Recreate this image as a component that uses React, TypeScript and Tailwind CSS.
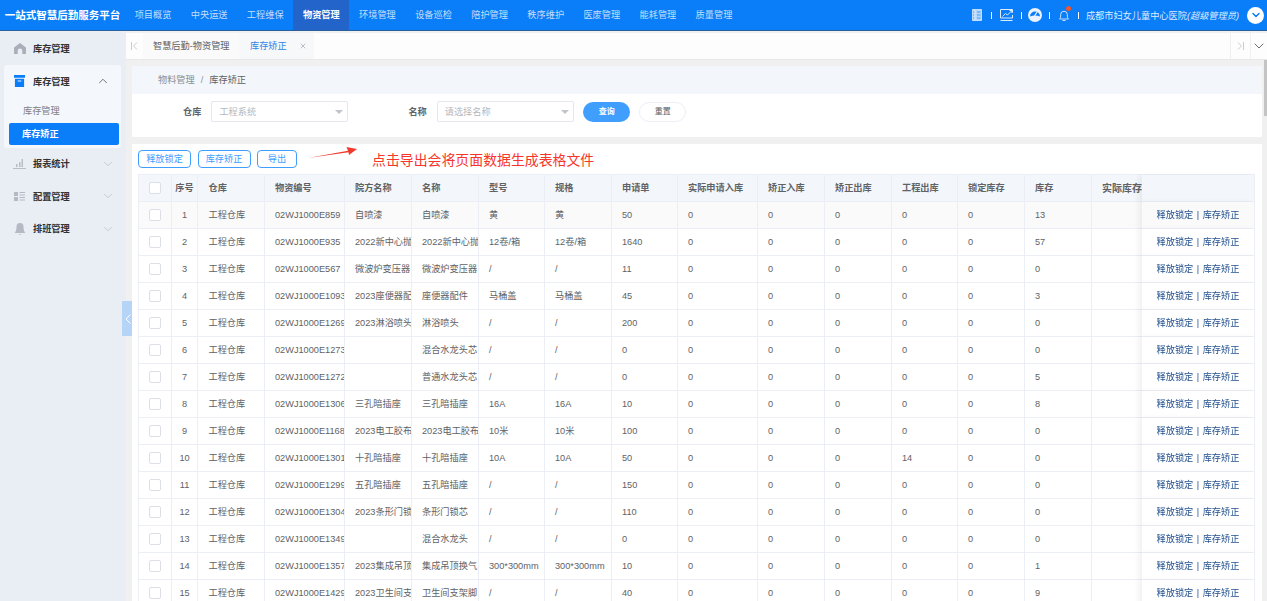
import React from 'react';
import { ChevronDown, ChevronUp, X } from 'lucide-react';

const navItems = ['项目概览', '中央运送', '工程维保', '物资管理', '环境管理', '设备巡检', '陪护管理', '秩序维护', '医废管理', '能耗管理', '质量管理'];

type Row = { n: number; code: string; yf: string; name: string; xh: string; gg: string; sq: string; gc: string; kc: string };

const rows: Row[] = [
  { n: 1, code: '02WJ1000E859', yf: '自喷漆', name: '自喷漆', xh: '黄', gg: '黄', sq: '50', gc: '0', kc: '13' },
  { n: 2, code: '02WJ1000E935', yf: '2022新中心抛', name: '2022新中心抛', xh: '12卷/箱', gg: '12卷/箱', sq: '1640', gc: '0', kc: '57' },
  { n: 3, code: '02WJ1000E567', yf: '微波炉变压器', name: '微波炉变压器', xh: '/', gg: '/', sq: '11', gc: '0', kc: '0' },
  { n: 4, code: '02WJ1000E1093', yf: '2023座便器配', name: '座便器配件', xh: '马桶盖', gg: '马桶盖', sq: '45', gc: '0', kc: '3' },
  { n: 5, code: '02WJ1000E1269', yf: '2023淋浴喷头', name: '淋浴喷头', xh: '/', gg: '/', sq: '200', gc: '0', kc: '0' },
  { n: 6, code: '02WJ1000E1273', yf: '', name: '混合水龙头芯', xh: '/', gg: '/', sq: '0', gc: '0', kc: '0' },
  { n: 7, code: '02WJ1000E1272', yf: '', name: '普通水龙头芯', xh: '/', gg: '/', sq: '0', gc: '0', kc: '5' },
  { n: 8, code: '02WJ1000E1306', yf: '三孔暗插座', name: '三孔暗插座', xh: '16A', gg: '16A', sq: '10', gc: '0', kc: '8' },
  { n: 9, code: '02WJ1000E1168', yf: '2023电工胶布', name: '2023电工胶布', xh: '10米', gg: '10米', sq: '100', gc: '0', kc: '0' },
  { n: 10, code: '02WJ1000E1301', yf: '十孔暗插座', name: '十孔暗插座', xh: '10A', gg: '10A', sq: '50', gc: '14', kc: '0' },
  { n: 11, code: '02WJ1000E1299', yf: '五孔暗插座', name: '五孔暗插座', xh: '/', gg: '/', sq: '150', gc: '0', kc: '0' },
  { n: 12, code: '02WJ1000E1304', yf: '2023条形门锁', name: '条形门锁芯', xh: '/', gg: '/', sq: '110', gc: '0', kc: '0' },
  { n: 13, code: '02WJ1000E1349', yf: '', name: '混合水龙头', xh: '/', gg: '/', sq: '0', gc: '0', kc: '0' },
  { n: 14, code: '02WJ1000E1357', yf: '2023集成吊顶', name: '集成吊顶换气', xh: '300*300mm', gg: '300*300mm', sq: '10', gc: '0', kc: '1' },
  { n: 15, code: '02WJ1000E1429', yf: '2023卫生间支', name: '卫生间支架脚', xh: '/', gg: '/', sq: '40', gc: '0', kc: '9' },
];

const heads = ['院方名称', '名称', '型号', '规格', '申请单', '实际申请入库', '矫正入库', '矫正出库', '工程出库', '锁定库存', '库存'];
const colWidths = ['w-[33px]', 'w-[26px]', 'w-[66.5px]', 'w-[80px]', 'w-[67px]', 'w-[67px]', 'w-[66px]', 'w-[67px]', 'w-[66px]', 'w-[80px]', 'w-[67px]', 'w-[67px]', 'w-[66px]', 'w-[67px]', 'w-[67px]', 'w-[67px]', 'w-[113px]'];

const cell = 'h-[27px] border-r border-b border-[#ebeef5] whitespace-nowrap overflow-hidden';
const th = `${cell} pt-[2px] px-[10.5px] text-left font-bold text-[#606266]`;
const td = `${cell} pt-[2px] px-[10.5px] text-left font-normal text-[#606266]`;
const thMid = `${cell} pt-[2px] px-0 text-center font-bold text-[#606266]`;
const tdMid = `${cell} pt-[2px] px-0 text-center text-[#606266]`;
const checkCell = `${cell} p-0`;
const fixedShadow = 'sticky right-0 shadow-[-4px_0_5px_rgba(0,0,0,0.05)]';
const outlineBtn = 'h-[18px] pt-[2px] border border-[#409eff] rounded-[4px] text-[#409eff] bg-white';

function Checkbox() {
  return <span className="block w-3 h-3 mx-auto bg-white border border-[#dcdfe6] rounded-[2px]" />;
}

function Select({ value }: { value: string }) {
  return (
    <div className="w-[137px] h-[21px] flex items-center justify-between pl-[7px] pr-[4px] bg-white border border-[#e4e7ed] rounded-[2px] text-[#b4b8c0]">
      <span className="pt-[2px]">{value}</span>
      <span className="w-0 h-0 border-x-[4px] border-x-transparent border-t-[4px] border-t-[#c0c4cc]" />
    </div>
  );
}

function SideItem({ label, icon, open }: { label: string; icon: React.ReactNode; open?: boolean }) {
  return (
    <div className="h-[32.5px] flex items-center pl-[13px] pr-[11px]">
      <span className="w-[13px] h-[13px] flex items-center justify-center">{icon}</span>
      <span className="ml-[7px] pt-[2px] font-bold text-[#303133]">{label}</span>
      {open === undefined ? null : open ? (
        <ChevronUp className="ml-auto w-[14px] h-[14px] text-[#606266]" strokeWidth={1.5} />
      ) : (
        <ChevronDown className="ml-auto w-[14px] h-[14px] text-[#c0c4cc]" strokeWidth={1.5} />
      )}
    </div>
  );
}

export default function App() {
  return (
    <div className="w-[1267px] h-[601px] overflow-hidden flex flex-col bg-[#f0f0f0] text-[9.2px] leading-none font-['Liberation_Sans','Noto_Sans_CJK_SC',sans-serif]">
      {/* top bar */}
      <header className="h-[31px] shrink-0 flex items-stretch bg-[#0a7df8] border-b border-[#2a5f9e] text-white">
        <div className="w-[125px] flex items-center justify-center text-[10.5px] font-bold">一站式智慧后勤服务平台</div>
        <nav className="flex">
          {navItems.map((item) => (
            <div
              key={item}
              className={item === '物资管理' ? 'w-[56.1px] pt-[2px] flex items-center justify-center font-bold bg-[#2264c9]' : 'w-[56.1px] pt-[2px] flex items-center justify-center text-[#c4defc]'}
            >
              {item}
            </div>
          ))}
        </nav>
        <div className="ml-auto flex items-center pr-[3px] text-[#dcecfe]">
          <svg viewBox="0 0 10 12" className="w-[10px] h-[12px]">
            <path d="M.5.5h9v11h-9z" fill="#b5d6fc" stroke="#dcecfe" strokeWidth=".8" />
            <path d="M3 0v12" stroke="#dcecfe" strokeWidth=".8" />
            <path d="M5 3h3.500M5 6h3.500M5 9h3.500M1 3h1M1 6h1M1 9h1" stroke="#3d95f9" strokeWidth=".9" />
          </svg>
          <span className="ml-[9.7px] mr-[7.3px] w-px h-[7px] bg-white" />
          <svg viewBox="0 0 13 12" className="w-[13px] h-[12px]" fill="none" stroke="currentColor" strokeWidth="1">
            <path d="M12.500 3.500V.5H.5v8.500h12V6M2.500 7.500l3-3 2 1.500L11.500 2M9.500 1.500h2.500V4M.5 11.500h12" />
          </svg>
          <span className="ml-[8px] mr-[6.3px] w-px h-[7px] bg-white" />
          <svg viewBox="0 0 14 14" className="w-[14px] h-[14px]">
            <circle cx="7" cy="7" r="7" fill="#eaf3fe" />
            <path d="M2 8.500a5 5 0 0 1 10 0c-3-1.500-7-1.500-10 0z" fill="#0a7df8" />
            <path d="M6.500 8l2.500-4" stroke="#eaf3fe" strokeWidth="1.200" />
          </svg>
          <span className="ml-[7px] mr-[9px] w-px h-[7px] bg-white" />
          <span className="relative">
            <svg viewBox="0 0 10 12" className="block w-[10px] h-[12px]" fill="none" stroke="currentColor" strokeWidth=".9">
              <path d="M.5 10c1-.8 1.200-2 1.200-4.500a3.300 3.300 0 0 1 6.600 0c0 2.500.2 3.700 1.200 4.500zM3.500 11.500h3" />
            </svg>
            <span className="absolute -top-[3px] -right-[2px] w-[5px] h-[5px] rounded-full bg-[#f2552c]" />
          </span>
          <span className="ml-[8.7px] mr-[7.3px] w-px h-[7px] bg-white" />
          <span className="pt-[3px]">
            成都市妇女儿童中心医院<i>(超级管理员)</i>
          </span>
          <span className="ml-[8px] w-[17px] h-[17px] rounded-full bg-white flex items-center justify-center">
            <ChevronDown className="w-[12px] h-[12px] text-[#0a7df8]" strokeWidth={3} />
          </span>
        </div>
      </header>

      <div className="flex-1 flex min-h-0">
        {/* sidebar */}
        <aside className="relative w-[126px] shrink-0 bg-[#e9edf4] pt-[1.5px]">
          <SideItem
            label="库存管理"
            icon={
              <svg viewBox="0 0 13 12" className="w-[12px] h-[11px]" fill="#a9aeb9">
                <path d="M6.500 0L0 5v7h4V8.500a2.500 2.500 0 0 1 5 0V12h4V5z" />
              </svg>
            }
          />
          <div className="ml-[4px] mr-[5px] bg-[#f4f8fc] rounded-[3px] pb-[3px]">
            <div className="-ml-[4px]">
              <SideItem
                label="库存管理"
                open
                icon={
                  <svg viewBox="0 0 12 13" className="w-[11px] h-[12px]" fill="#0a7df8">
                    <path d="M0 0h12v3H0zM1 4h10v9H1z" />
                    <path d="M4 6h4v1H4z" fill="#fff" />
                  </svg>
                }
              />
            </div>
            <div className="h-[21px] mt-[3px] pt-[2px] flex items-center pl-[19px] text-[#7d8088]">库存管理</div>
            <div className="h-[22px] mt-[1px] ml-[5px] mr-[2.5px] pl-[13px] pt-[2px] flex items-center font-bold text-white bg-[#0a7df8] rounded-[2px]">库存矫正</div>
          </div>
          <SideItem
            label="报表统计"
            open={false}
            icon={
              <svg viewBox="0 0 13 10" className="w-[13px] h-[10px]" fill="#b8bdc8">
                <path d="M0 9h13v1H0zM3 5h1.500v3H3zM6 3h1.500v5H6zM8.500 0H10v8H8.500z" />
              </svg>
            }
          />
          <SideItem
            label="配置管理"
            open={false}
            icon={
              <svg viewBox="0 0 11 9" className="w-[11px] h-[9px]" fill="#b4b9c4">
                <path d="M0 0h4v4H0zM0 5h4v4H0zM5.500 0H11v1H5.500zM5.500 2.500H11v1H5.500zM5.500 5H11v1H5.500zM5.500 7.500H11v1H5.500z" />
              </svg>
            }
          />
          <SideItem
            label="排班管理"
            open={false}
            icon={
              <svg viewBox="0 0 12 12" className="w-[12px] h-[12px]" fill="#b4b9c4">
                <path d="M6 0a3.500 3.500 0 0 0-3.500 3.500C2.500 7 2 8.500.5 10h11C10 8.500 9.500 7 9.500 3.500A3.500 3.500 0 0 0 6 0zM4.500 11h3L6 12z" />
              </svg>
            }
          />
          <button className="absolute left-[122px] top-[270px] w-[11px] h-[35px] flex items-center justify-center bg-[#b5d4f6] rounded-r-[2px]">
            <svg viewBox="0 0 6 10" className="w-[6px] h-[10px]" fill="none" stroke="#fff" strokeWidth="1">
              <path d="M5.500.5L1 5l4.500 4.500" />
            </svg>
          </button>
        </aside>

        <main className="relative flex-1 min-w-0 flex flex-col">
          {/* tabs */}
          <div className="h-[27px] mt-[2px] shrink-0 flex items-stretch bg-[#fdfdfd] border-b border-[#e8e8e8]">
            <div className="w-[17px] flex items-center justify-center">
              <svg viewBox="0 0 7 8" className="w-[7px] h-[8px]" fill="none" stroke="#c8ccd2" strokeWidth="1">
                <path d="M.5 0v8M6 .5L2.500 4 6 7.500" />
              </svg>
            </div>
            <div className="w-[96px] pl-[10px] pt-[2px] flex items-center bg-[#fafafa] text-[#606266]">智慧后勤-物资管理</div>
            <div className="w-[75px] pl-[11px] flex items-center bg-[#f7f8fa] text-[#2f86e8]">
              <span className="pt-[2px]">库存矫正</span>
              <X className="ml-[12px] w-[8px] h-[8px] text-[#8fa0b8]" />
            </div>
            <div className="ml-auto w-[20px] flex items-center justify-center border-l border-[#f0f0f0]">
              <svg viewBox="0 0 7 8" className="w-[7px] h-[8px]" fill="none" stroke="#c8ccd2" strokeWidth="1">
                <path d="M6.500 0v8M1 .5L4.500 4 1 7.500" />
              </svg>
            </div>
            <div className="w-[17px] flex items-center justify-center border-l border-[#f0f0f0]">
              <ChevronDown className="w-[16px] h-[16px] shrink-0 text-[#606266]" strokeWidth={1.4} />
            </div>
          </div>

          <div className="flex-1 min-h-0 pl-[6px] pr-[5px] pt-[6px] flex flex-col">
            {/* filters */}
            <section className="h-[71px] shrink-0 bg-white rounded-[1px]">
              <div className="h-[28px] pl-[26px] pt-[2px] flex items-center bg-[#f3f7fb] text-[#8a8f99]">
                物料管理<span className="mx-[6px]">/</span><span className="text-[#606266]">库存矫正</span>
              </div>
              <div className="flex items-center pt-[7px]">
                <span className="ml-[51px] mr-[10px] pt-[2px] font-bold text-[#606266]">仓库</span>
                <Select value="工程系统" />
                <span className="ml-[60px] mr-[10px] pt-[2px] font-bold text-[#606266]">名称</span>
                <Select value="请选择名称" />
                <button className="ml-[9.5px] w-[47px] h-[20px] pt-[1px] rounded-full bg-[#409eff] text-white text-[8px] font-bold">查询</button>
                <button className="ml-[9px] w-[47px] h-[20px] pt-[1px] rounded-full bg-white border border-[#ebeef5] text-[#606266] text-[8px]">重置</button>
              </div>
            </section>

            {/* table card */}
            <section className="flex-1 min-h-0 mt-[7px] bg-white pl-[6px] pr-[7px] pt-[6px] overflow-hidden">
              <div className="h-[18px] mb-[6px] flex items-center">
                <button className={`${outlineBtn} w-[53px]`}>释放锁定</button>
                <button className={`${outlineBtn} w-[53px] ml-[6.5px]`}>库存矫正</button>
                <button className={`${outlineBtn} w-[40px] ml-[6.5px]`}>导出</button>
                <svg viewBox="0 0 49 12" className="w-[49px] h-[12px] ml-[11px] -translate-y-[6.5px]">
                  <path d="M0 11.500L40 4.200 38.500.5 49 2.500 41 8.500 40.500 5.800z" fill="#f03a2e" />
                </svg>
                <span className="ml-[15px] pt-[4px] text-[13.9px] text-[#f6352b]">点击导出会将页面数据生成表格文件</span>
              </div>
              <div className="overflow-hidden">
                <table className="table-fixed border-separate border-spacing-0 border-l border-t border-[#ebeef5] w-[1132.5px]">
                  <colgroup>
                    {colWidths.map((w, i) => (
                      <col key={i} className={w} />
                    ))}
                  </colgroup>
                  <thead>
                    <tr className="bg-[#f3f7fb]">
                      <th className={checkCell}><Checkbox /></th>
                      <th className={thMid}>序号</th>
                      <th className={th}>仓库</th>
                      <th className={th}>物资编号</th>
                      {heads.map((h) => (
                        <th key={h} className={th}>{h}</th>
                      ))}
                      <th className={`${th} text-[10px]`}>实际库存</th>
                      <th className={`${thMid} ${fixedShadow} bg-[#f3f7fb]`} />
                    </tr>
                  </thead>
                  <tbody>
                    {rows.map((r) => (
                      <tr key={r.n} className={r.n === 1 ? 'bg-[#fafafa]' : 'bg-white'}>
                        <td className={checkCell}><Checkbox /></td>
                        <td className={tdMid}>{r.n}</td>
                        <td className={td}>工程仓库</td>
                        <td className={td}>{r.code}</td>
                        <td className={td}>{r.yf}</td>
                        <td className={td}>{r.name}</td>
                        <td className={td}>{r.xh}</td>
                        <td className={td}>{r.gg}</td>
                        <td className={td}>{r.sq}</td>
                        <td className={td}>0</td>
                        <td className={td}>0</td>
                        <td className={td}>0</td>
                        <td className={td}>{r.gc}</td>
                        <td className={td}>0</td>
                        <td className={td}>{r.kc}</td>
                        <td className={td} />
                        <td className={`${tdMid} ${fixedShadow} ${r.n === 1 ? 'bg-[#fafafa]' : 'bg-white'}`}>
                          <span className="text-[#24528f]">释放锁定</span>
                          <span className="mx-[3.5px] text-[#24528f]">|</span>
                          <span className="text-[#24528f]">库存矫正</span>
                        </td>
                      </tr>
                    ))}
                  </tbody>
                </table>
              </div>
            </section>
          </div>
          {/* page scrollbar */}
          <div className="absolute right-0 top-[29px] w-[3px] h-[56px] bg-[#c4c4c4]" />
        </main>
      </div>
    </div>
  );
}
